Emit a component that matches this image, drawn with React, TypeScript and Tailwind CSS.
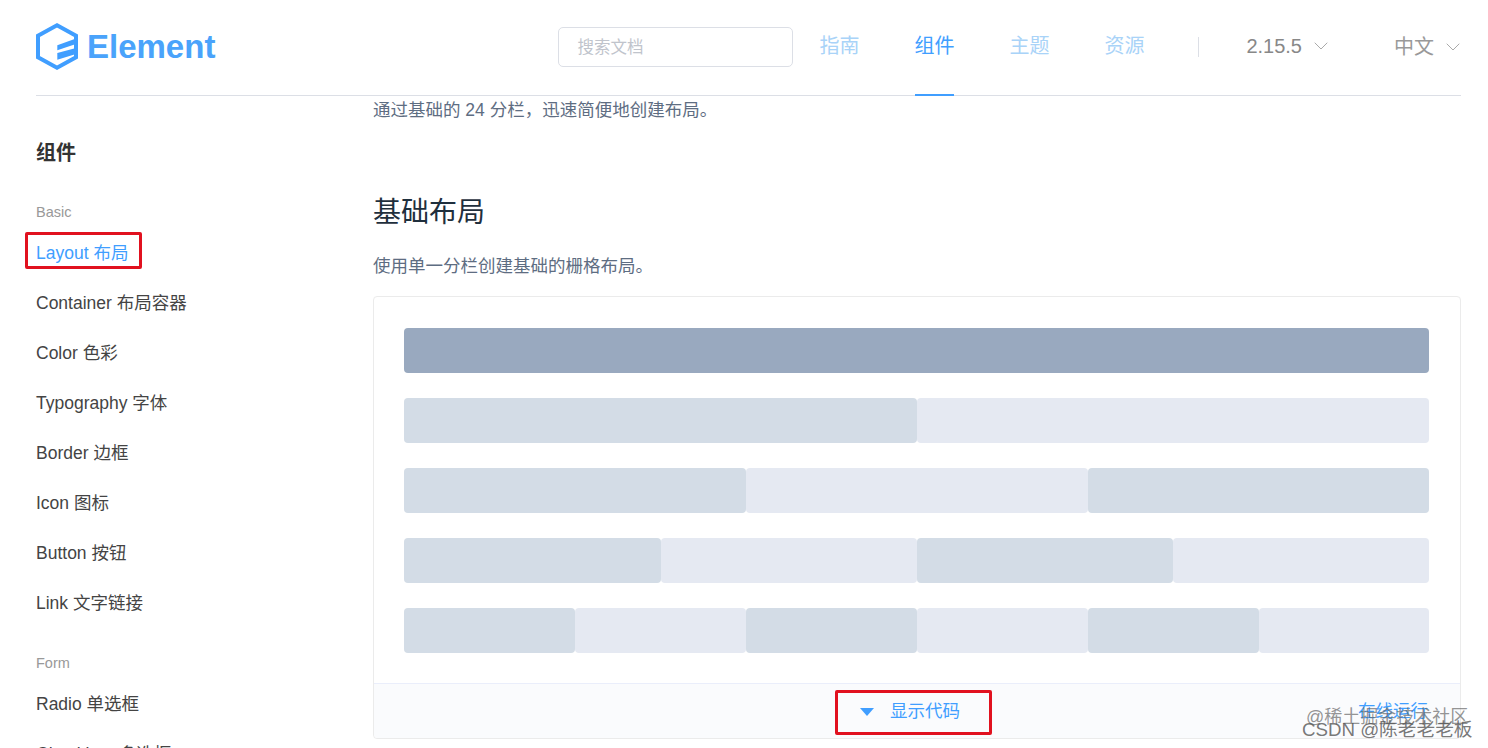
import { ChevronDown } from "lucide-react";

const sans = "font-['Liberation_Sans','Noto_Sans_CJK_SC',sans-serif]";

const basicItems = [
  "Layout 布局",
  "Container 布局容器",
  "Color 色彩",
  "Typography 字体",
  "Border 边框",
  "Icon 图标",
  "Button 按钮",
  "Link 文字链接",
];

const formItems = ["Radio 单选框", "Checkbox 多选框"];

const navLinks = [
  { label: "指南", active: false },
  { label: "组件", active: true },
  { label: "主题", active: false },
  { label: "资源", active: false },
];

const Logo = () => (
  <div className="mb-[3px] flex items-center gap-[9px]">
    <svg width="42" height="47" viewBox="0 0 42 47" fill="none">
      <path d="M21 2.3 40 12.8V34.2L21 44.7 2 34.2V12.8Z" stroke="#409eff" strokeWidth="4" />
      <path d="M21.3 22.3 40 15.5V21L21.3 27.3Z" fill="#409eff" />
      <path d="M21.3 30 40 25V31L21.3 36.7Z" fill="#409eff" />
    </svg>
    <span className="text-[33px] font-bold leading-none text-[#4aa3fb]">Element</span>
  </div>
);

const Header = () => (
  <header className="flex h-[96px] shrink-0 items-center justify-between border-b border-[#dcdfe6]">
    <Logo />
    <div className="flex items-center">
      <div className="mb-[2px] flex h-[40px] w-[235px] items-center rounded-[5px] border border-[#dcdfe6] pl-[18px] pt-[2px] text-[16.5px] text-[#c0c4cc]">
        搜索文档
      </div>
      <nav className="ml-[26px] flex gap-[55px]">
        {navLinks.map((link) => (
          <div key={link.label} className="relative flex h-[95px] w-[40px] items-center justify-center pb-[3px]">
            <span className={link.active ? "text-[20px] text-[#409eff]" : "text-[20px] text-[#a9d3f8]"}>{link.label}</span>
            {link.active && <div className="absolute bottom-[-1px] left-[1px] h-[2px] w-[39px] bg-[#409eff]" />}
          </div>
        ))}
      </nav>
      <div className="mb-[2px] ml-[54px] h-[20px] w-px bg-[#dcdfe6]" />
      <div className="mb-[3px] ml-[47px] flex items-center text-[20px] text-[#888]">
        2.15.5
        <ChevronDown className="ml-[7px] h-[24px] w-[24px] text-[#aaa]" strokeWidth={1} />
      </div>
      <div className="mb-[2px] ml-[61px] mr-[-4px] flex items-center text-[20px] text-[#999]">
        中文
        <ChevronDown className="ml-[7px] h-[24px] w-[24px] text-[#aaa]" strokeWidth={1} />
      </div>
    </div>
  </header>
);

const Sidebar = () => (
  <aside className="w-[337px] shrink-0">
    <h3 className="mt-[43px] text-[20px] font-bold leading-[28px] text-[#333]">组件</h3>
    <div className="mt-[35px] text-[14.5px] leading-[20px] text-[#999]">Basic</div>
    <ul className="mt-[6px]">
      {basicItems.map((item, i) => (
        <li key={item} className="relative h-[50px] text-[17.5px] leading-[50px] text-[#444]">
          <span className={i === 0 ? "text-[#409eff]" : ""}>{item}</span>
          {i === 0 && (
            <div className="absolute left-[-11px] top-[4px] h-[37px] w-[117px] rounded-[2px] border-[3px] border-[#e1111f]" />
          )}
        </li>
      ))}
    </ul>
    <div className="mt-[25px] text-[14.5px] leading-[20px] text-[#999]">Form</div>
    <ul className="mt-[6px]">
      {formItems.map((item) => (
        <li key={item} className="h-[50px] text-[17.5px] leading-[50px] text-[#444]">
          {item}
        </li>
      ))}
    </ul>
  </aside>
);

const rows = [
  [24],
  [12, 12],
  [8, 8, 8],
  [6, 6, 6, 6],
  [4, 4, 4, 4, 4, 4],
];

const GridRow = ({ spans, dark }: { spans: number[]; dark: boolean }) => (
  <div className="flex h-[45px]">
    {spans.map((span, i) => (
      <div
        key={i}
        className={`h-[45px] rounded-[4px] ${dark ? "bg-[#99a9bf]" : i % 2 === 0 ? "bg-[#d3dce6]" : "bg-[#e5e9f2]"}`}
        style={{ width: `${(span / 24) * 100}%` }}
      />
    ))}
  </div>
);

const DemoCard = () => (
  <div className="relative mt-[17px] h-[443px] rounded-[4px] border border-[#ebebeb]">
    <div className="flex h-[386px] flex-col gap-[25px] pl-[30.4px] pr-[30.6px] pt-[31px]">
      {rows.map((spans, i) => (
        <GridRow key={i} spans={spans} dark={i === 0} />
      ))}
    </div>
    <div className="relative flex h-[55px] items-center justify-center rounded-b-[4px] border-t border-[#eaeefb] bg-[#fafbfd] text-[#409eff]">
      <div className="relative left-[-7px] flex items-center">
        <div className="mt-[2px] h-0 w-0 border-x-[7px] border-t-[8px] border-x-transparent border-t-[#409eff]" />
        <span className="ml-[16px] text-[17.5px]">显示代码</span>
      </div>
      <span className="absolute right-[32px] top-[15px] text-[17.5px] leading-[24px]">在线运行</span>
    </div>
    <div className="absolute left-[461px] top-[393px] h-[45px] w-[157px] rounded-[2px] border-[3px] border-[#e1111f]" />
  </div>
);

const Main = () => (
  <main className="min-w-0 flex-1">
    <p className="mt-[1px] text-[17.5px] leading-[26px] text-[#5e6d82]">通过基础的 24 分栏，迅速简便地创建布局。</p>
    <h3 className="mt-[71px] text-[28px] font-normal leading-[38px] text-[#1f2f3d]">基础布局</h3>
    <p className="mt-[21px] text-[17.5px] leading-[26px] text-[#5e6d82]">使用单一分栏创建基础的栅格布局。</p>
    <DemoCard />
  </main>
);

export default function App() {
  return (
    <div className={`relative h-[748px] w-[1488px] overflow-hidden bg-white ${sans}`}>
      <div className="flex h-full w-[1461px] flex-col pl-[36px]">
        <Header />
        <div className="flex min-h-0 flex-1">
          <Sidebar />
          <Main />
        </div>
      </div>
      {/* watermark */}
      <div className="absolute left-[1306px] top-[705px] text-[18px] leading-[24px] text-[#666]/70">@稀土掘金技术社区</div>
      <div className="absolute left-[1302px] top-[718px] text-[18.7px] leading-[24px] text-[#555]/80">CSDN @陈老老老板</div>
    </div>
  );
}
